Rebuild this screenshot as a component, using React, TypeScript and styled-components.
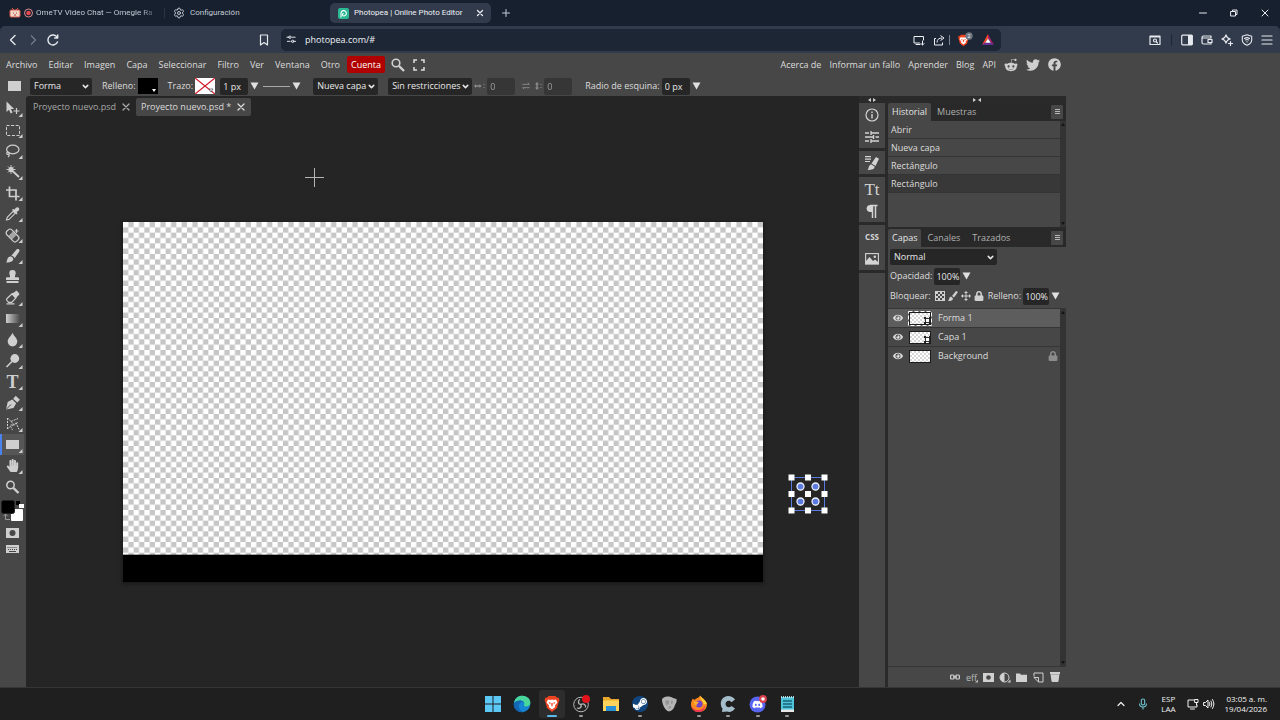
import React from "react";
import styled, { createGlobalStyle } from "styled-components";
import {
  FaDiscord,
  FaEye,
  FaFacebook,
  FaHandPaper,
  FaLock,
  FaRedditAlien,
  FaSteamSymbol,
  FaTwitter,
} from "react-icons/fa";
import { ChevronDown, Settings } from "lucide-react";

const UI = '"Open Sans", "Noto Sans", sans-serif';
const CHROME = 'Roboto, "Open Sans", sans-serif';

const Global = createGlobalStyle`
  *, *::before, *::after { box-sizing: border-box; }
  body { margin: 0; background: #474747; }
  button, input, select { font: inherit; color: inherit; border: 0; margin: 0; padding: 0; background: none; border-radius: 0; }
  button { cursor: pointer; }
  a { color: inherit; text-decoration: none; }
  svg { display: block; flex: none; }
  ul { list-style: none; margin: 0; padding: 0; }
`;

const Screen = styled.div`
  min-height: 100vh;
  display: flex;
  flex-direction: column;
  background: #474747;
  color: #dcdcdc;
  font-family: ${UI};
  font-size: 9px;
  line-height: 12px;
`;

/* ---------- browser chrome ---------- */
const TabStrip = styled.header`
  height: 26px;
  display: flex;
  align-items: center;
  background: #17202f;
  color: #c3cad6;
  font-family: ${CHROME};
  font-size: 8px;
  flex: none;
`;
const BrowserTab = styled.div<{ $active?: boolean; $width: number }>`
  width: ${(p) => p.$width}px;
  height: 20px;
  display: flex;
  align-items: center;
  gap: 5px;
  padding: 0 6px 0 8px;
  border-radius: 5px;
  white-space: nowrap;
  background: ${(p) => (p.$active ? "#323b4b" : "transparent")};
  color: ${(p) => (p.$active ? "#eef1f6" : "inherit")};
`;
const FadeTitle = styled.span`
  flex: 1;
  margin-left: -3px;
  mask-image: linear-gradient(90deg, #000 86%, transparent);
`;
const TabTitle = styled.span`
  flex: 1;
`;
const TabDivider = styled.span`
  width: 1px;
  height: 10px;
  background: #2b3547;
`;
const IconButton = styled.button<{ $w?: number; $h?: number }>`
  width: ${(p) => p.$w ?? 20}px;
  height: ${(p) => p.$h ?? 20}px;
  display: flex;
  align-items: center;
  justify-content: center;
`;
const WindowButtons = styled.div`
  margin-left: auto;
  display: flex;
  color: #e6e9ee;
`;
const NavStrip = styled.div`
  background: #17202f;
`;
const NavBar = styled.nav`
  height: 27px;
  display: flex;
  align-items: center;
  padding-left: 3px;
  padding-right: 3px;
  background: #323b4b;
  border-radius: 5px 5px 0 0;
  color: #e6e9ee;
`;
const Bookmark = styled(IconButton)`
  margin-left: 191px;
`;
const AddressBar = styled.div`
  flex: 1;
  height: 22px;
  margin-left: 7px;
  display: flex;
  align-items: center;
  gap: 6px;
  padding: 0 5px;
  border-radius: 5px;
  background: #1d2635;
  color: #eef1f6;
`;
const Address = styled.input`
  flex: 1;
  min-width: 0;
  padding-left: 2px;
  outline: none;
`;
const NavActions = styled.div`
  display: flex;
  margin-left: 144px;
`;
const NavSeparator = styled.span`
  width: 1px;
  height: 12px;
  margin: 4px 5px 0 6px;
  background: #1d2635;
`;

/* ---------- menus and options ---------- */
const MenuBar = styled.nav`
  height: 23px;
  display: flex;
  align-items: center;
  padding-right: 214px;
  flex: none;
`;
const MenuItem = styled.button<{ $hot?: boolean }>`
  height: 17px;
  padding: 0 ${(p) => (p.$hot ? 4 : 5)}px 0 ${(p) => (p.$hot ? 4 : 6)}px;
  margin-left: ${(p) => (p.$hot ? 2 : 0)}px;
  border-radius: 2px;
  background: ${(p) => (p.$hot ? "#b00000" : "transparent")};
  color: ${(p) => (p.$hot ? "#fff" : "inherit")};
`;
const MenuLinks = styled.div`
  margin-left: auto;
  display: flex;
  align-items: center;
  gap: 8px;
  padding-right: 5px;
`;
const Socials = styled.div`
  display: flex;
  align-items: center;
  gap: 8px;
  color: #cfcfcf;
`;
const OptionsBar = styled.div`
  height: 20px;
  display: flex;
  align-items: center;
  padding-left: 8px;
  flex: none;
`;
const OptionGroup = styled.div<{ $before?: number; $dim?: boolean }>`
  display: flex;
  align-items: center;
  gap: 2px;
  margin-left: ${(p) => p.$before ?? 10}px;
  opacity: ${(p) => (p.$dim ? 0.5 : 1)};
`;
const SelectBox = styled.div<{ $width: number; $h?: number }>`
  width: ${(p) => p.$width}px;
  height: ${(p) => p.$h ?? 17}px;
  position: relative;
  border-radius: 2px;
  background: #262626;
  color: #e8e8e8;
  select {
    width: 100%;
    height: 100%;
    padding-left: 4px;
    appearance: none;
    outline: none;
  }
  svg {
    position: absolute;
    right: 2px;
    top: 4px;
    pointer-events: none;
  }
`;
const NumberBox = styled.input<{ $width?: number }>`
  width: ${(p) => p.$width ?? 28}px;
  height: 17px;
  padding-left: ${(p) => (p.$width ? 2 : 3)}px;
  border-radius: 2px;
  background: #262626;
  color: #e8e8e8;
  outline: none;
`;
const Swatch = styled.button`
  width: 20px;
  height: 16px;
`;

/* ---------- workspace ---------- */
const Workspace = styled.main`
  flex: 1;
  display: flex;
  padding-right: 214px;
`;
const Toolbox = styled.aside`
  width: 26px;
  padding-top: 2px;
  display: flex;
  flex-direction: column;
  flex: none;
  color: #cfcfcf;
`;
const ToolButton = styled.button<{ $active?: boolean; $h?: number }>`
  height: ${(p) => p.$h ?? 21}px;
  width: 24px;
  background: ${(p) => (p.$active ? "#565656" : "transparent")};
  box-shadow: ${(p) => (p.$active ? "inset 2px 0 #4a83f0" : "none")};
`;
const Editor = styled.section`
  flex: 1;
  min-width: 0;
  display: flex;
  flex-direction: column;
  background: #252525;
  border-radius: 3px 0 0 0;
`;
const DocTabs = styled.div`
  display: flex;
  padding-top: 2px;
`;
const DocTab = styled.div<{ $active?: boolean }>`
  height: 18px;
  display: flex;
  align-items: center;
  gap: 3px;
  padding: 0 3px 0 ${(p) => (p.$active ? 5 : 7)}px;
  border-radius: 2px;
  background: ${(p) => (p.$active ? "#474747" : "transparent")};
  color: ${(p) => (p.$active ? "#dcdcdc" : "#a8a8a8")};
`;
const Stage = styled.div`
  flex: 1;
  display: flex;
  align-items: center;
  justify-content: center;
`;
const Artboard = styled.div`
  position: relative;
  box-shadow: 0 1px 3px 1px #1a1a1a;
`;
const Overlay = styled.svg<{ $x: number; $y: number }>`
  position: absolute;
  left: ${(p) => p.$x}px;
  top: ${(p) => p.$y}px;
`;

/* ---------- right side panels ---------- */
const Dock = styled.aside`
  display: flex;
  background: #2a2a2a;
  flex: none;
`;
const DockColumn = styled.div<{ $width: number }>`
  width: ${(p) => p.$width}px;
  margin-right: ${(p) => (p.$width < 50 ? 3 : 0)}px;
  display: flex;
  flex-direction: column;
`;
const Handle = styled.div`
  height: 7px;
  display: flex;
  justify-content: center;
  align-items: center;
`;
const DockGroup = styled.div<{ $fill?: boolean }>`
  display: flex;
  flex-direction: column;
  align-items: center;
  margin-bottom: ${(p) => (p.$fill ? 0 : 3)}px;
  padding: 1px 0;
  flex: ${(p) => (p.$fill ? 1 : "none")};
  background: #474747;
  color: #d4d4d4;
`;
const PanelTabs = styled.div`
  height: 18px;
  display: flex;
  align-items: center;
  padding-right: 3px;
  background: #292929;
`;
const PanelTab = styled.button<{ $active?: boolean }>`
  height: 18px;
  padding: 0 ${(p) => (p.$active ? 4 : 6)}px;
  border-radius: 2px 2px 0 0;
  background: ${(p) => (p.$active ? "#474747" : "transparent")};
  color: ${(p) => (p.$active ? "#e4e4e4" : "#b0b0b0")};
`;
const PanelMenu = styled(IconButton)`
  margin-left: auto;
  background: #474747;
  border-radius: 1px;
`;
const HistoryPanel = styled.div`
  display: flex;
  height: 106px;
  margin-bottom: 2px;
  background: #474747;
`;
const List = styled.ul`
  flex: 1;
`;
const HistoryRow = styled.li<{ $current?: boolean }>`
  height: 18px;
  padding: 3px 3px 2px;
  border-bottom: 1px solid #343434;
  background: ${(p) => (p.$current ? "#383838" : "transparent")};
`;
const Scrollbar = styled.div`
  width: 6px;
  display: flex;
  flex-direction: column;
  justify-content: space-between;
  align-items: center;
  padding: 2px 0;
  background: #333;
`;
const LayersPanel = styled.div`
  flex: 1;
  display: flex;
  flex-direction: column;
  background: #474747;
`;
const LayerControls = styled.div`
  display: flex;
  flex-direction: column;
  gap: 2px;
  padding: 2px 2px 3px;
`;
const ControlRow = styled.div`
  height: 18px;
  display: flex;
  align-items: center;
  gap: 2px;
`;
const LockButtons = styled.div`
  display: flex;
  gap: 3px;
  margin-left: 2px;
`;
const LayerArea = styled.div`
  flex: 1;
  display: flex;
  border-top: 1px solid #363636;
  border-bottom: 1px solid #363636;
`;
const LayerRow = styled.li<{ $active?: boolean }>`
  height: 19px;
  display: flex;
  align-items: center;
  padding: 0 2px 0 4px;
  border-bottom: 1px solid #363636;
  background: ${(p) => (p.$active ? "#5d5d5d" : "transparent")};
  &:last-child {
    border-bottom-color: transparent;
  }
`;
const LayerName = styled.span`
  flex: 1;
  padding-left: 6px;
`;
const LayerActions = styled.div`
  height: 20px;
  display: flex;
  align-items: center;
  justify-content: flex-end;
  padding-right: 3px;
  color: #d0d0d0;
`;

/* ---------- taskbar ---------- */
const Taskbar = styled.footer`
  height: 33px;
  display: grid;
  grid-template-columns: 1fr 320px 1fr;
  align-items: center;
  border-top: 1px solid #363636;
  background: #1f1f1f;
  color: #f2f2f2;
  font-size: 8px;
  line-height: 10px;
  flex: none;
`;
const Apps = styled.div`
  grid-column: 2;
  display: flex;
  justify-content: space-between;
`;
const AppButton = styled.button<{ $active?: boolean }>`
  width: 26px;
  height: 28px;
  display: flex;
  flex-direction: column;
  align-items: center;
  justify-content: space-between;
  padding-top: 5px;
  padding-bottom: 1px;
  border-radius: 3px;
  background: ${(p) => (p.$active ? "#2d2d2d" : "transparent")};
`;
const RunMark = styled.span<{ $kind: "none" | "open" | "active" }>`
  height: 2px;
  width: ${(p) => (p.$kind === "active" ? 10 : 4)}px;
  border-radius: 1px;
  background: ${(p) => (p.$kind === "active" ? "#5cb8e8" : p.$kind === "open" ? "#9a9a9a" : "transparent")};
`;
const Tray = styled.div`
  display: flex;
  align-items: center;
  justify-content: flex-end;
  padding-right: 13px;
`;
const TrayText = styled.div<{ $align: string }>`
  text-align: ${(p) => p.$align};
  white-space: nowrap;
`;
const Language = styled(TrayText)`
  margin: 0 9px 0 7px;
`;
const Clock = styled(TrayText)`
  margin-left: 8px;
`;

/* ---------- small drawings ---------- */
const Line = ({ d, size = 12, w = 1 }: { d: string; size?: number; w?: number }) => (
  <svg width={size} height={size} viewBox="0 0 12 12" fill="none" stroke="currentColor" strokeWidth={w} strokeLinecap="round" strokeLinejoin="round">
    <path d={d} />
  </svg>
);
const Caret = () => (
  <svg width="9" height="8" viewBox="0 0 9 8">
    <path d="M.5 .5h8L4.500 7.500z" fill="#e0e0e0" />
  </svg>
);
const Cross = () => <Line d="M3 3l6 6M9 3l-6 6" w={1.3} />;
const Burger = () => (
  <svg width="5" height="6" viewBox="0 0 5 6" stroke="#b8b8b8">
    <path d="M0 .5h5M0 2.500h5M0 4.500h5" />
  </svg>
);
const ScrollEnd = ({ up }: { up?: boolean }) => (
  <svg width="4" height="3" viewBox="0 0 4 3">
    <path d={up ? "M0 3h4L2 0z" : "M0 0h4L2 3z"} fill="#141414" />
  </svg>
);
const Grip = ({ inward }: { inward?: boolean }) => (
  <svg width="8" height="4" viewBox="0 0 8 4" fill="#d0d0d0">
    <path d={inward ? "M0 0v4l3-2zM8 0v4L5 2z" : "M3 0v4L0 2zM5 0v4l3-2z"} />
  </svg>
);

function Dropdown({ label, options, width, height }: { label: string; options: string[]; width: number; height?: number }) {
  return (
    <SelectBox $width={width} $h={height}>
      <select aria-label={label} defaultValue={options[0]}>
        {options.map((o) => (
          <option key={o}>{o}</option>
        ))}
      </select>
      <ChevronDown size={9} strokeWidth={4} />
    </SelectBox>
  );
}

const S = { fill: "none", stroke: "currentColor", strokeWidth: 1.2 } as const;
const tools: { name: string; art: React.ReactNode; plain?: boolean }[] = [
  {
    name: "Mover",
    art: (
      <>
        <path d="M6.500 3.500v10.500l2.500-2.300 1.700 3.800 1.900-.9-1.700-3.600h3.300z" fill="currentColor" />
        <path d="M16.500 10v6M13.500 13h6" {...S} />
      </>
    ),
  },
  { name: "Marco rectangular", art: <rect x="6.500" y="6.500" width="13" height="10" {...S} strokeWidth={1} strokeDasharray="3 1.600" /> },
  {
    name: "Lazo",
    art: (
      <g {...S}>
        <ellipse cx="12.800" cy="9.500" rx="6.200" ry="4.300" />
        <path d="M7.500 12c-1.600 1.300-.3 3 1 2.200s.3-2.700-1.300-2M9 14c.5 1 0 2.300-1 3" />
      </g>
    ),
  },
  {
    name: "Varita mágica",
    art: (
      <g {...S}>
        <circle cx="11" cy="8.500" r="2" fill="currentColor" />
        <path d="M11 4v9M6.500 8.500h9M8 5.500l6 6M14 5.500l-6 6" strokeWidth="0.900" />
        <path d="M12 9.500l7 6.500" strokeWidth="1.800" />
      </g>
    ),
  },
  { name: "Recortar", art: <path d="M9.500 4.500v10H19.500M6 8h10V18.500" {...S} strokeWidth={1.700} /> },
  {
    name: "Cuentagotas",
    art: (
      <>
        <path d="M6.500 17l.7-2.700 6-6 2 2-6 6z" {...S} strokeWidth={1.100} />
        <path d="M12 7l1.200-1.200 1 1L16 4.700c1.800-1.700 4.500 1 2.700 2.700L16.600 9.200l1 1-1.200 1.200z" fill="currentColor" />
      </>
    ),
  },
  {
    name: "Pincel corrector",
    art: (
      <>
        <g transform="rotate(45 12.500 11.500)">
          <rect x="5.500" y="8" width="14" height="7" rx="2.500" {...S} />
          <rect x="10" y="8.500" width="5" height="6" fill="currentColor" opacity="0.700" />
        </g>
        <path d="M16.500 5v4M14.500 7h4" {...S} />
      </>
    ),
  },
  { name: "Pincel", art: <path d="M6 17.500c1.500-1 .7-3.800 2.500-5.200 1.600-1.300 3.700-.6 4.500.9.900 2.200-1 4.300-7 4.300zM11.300 10.800l5.200-6.300c1.900-1.400 3.900.4 2.600 2.300L14.600 13.200c-.6-1.500-1.700-2.200-3.300-2.400z" fill="currentColor" /> },
  { name: "Tampón", plain: true, art: <path d="M12.500 4a3.200 3.200 0 0 1 3.200 3.400c-.1 1.200-.9 2-.7 3.900H18a1 1 0 0 1 1 1V14H6v-1.700a1 1 0 0 1 1-1h3c.2-1.900-.6-2.700-.7-3.900A3.200 3.200 0 0 1 12.500 4zM6.500 15h12v2h-12z" fill="currentColor" /> },
  {
    name: "Borrador",
    art: (
      <>
        <path d="M11.500 7.200l4-3c.7-.5 1.300-.4 1.800.1l1.700 2c.5.7.4 1.300-.1 1.800l-3.500 3.500z" fill="currentColor" />
        <path d="M12.400 6.500L7 11.500c-.8.8-.6 1.500 0 2.200l1.700 1.700h3l4.300-4.600zM6.500 16.800h8" {...S} />
      </>
    ),
  },
  { name: "Degradado", art: <rect x="6" y="6" width="14" height="9" fill="url(#fadeFill)" /> },
  { name: "Desenfocar", art: <path d="M12.500 3.800c1 3 4.800 5.500 4.800 8.800a4.800 4.800 0 0 1-9.600 0c0-3.300 3.800-5.800 4.800-8.800z" fill="currentColor" /> },
  {
    name: "Sobreexponer",
    art: (
      <>
        <circle cx="14.800" cy="8.500" r="4.400" fill="currentColor" />
        <path d="M12 11.500l-5.500 5.500" {...S} strokeWidth={1.600} />
      </>
    ),
  },
  {
    name: "Texto",
    art: (
      <text x="12.500" y="17" textAnchor="middle" fontFamily="Liberation Serif, serif" fontWeight="700" fontSize="18" fill="currentColor">
        T
      </text>
    ),
  },
  {
    name: "Pluma",
    art: (
      <>
        <path d="M6 17.500l1.700-7.500 4.500-2.500 4 3.800-2.700 4.600z" fill="currentColor" />
        <path d="M6.500 17l4.500-4.500" stroke="#474747" />
        <path d="M13.200 6.700l2.500-2.900 4.200 4-2.700 2.700z" fill="currentColor" />
      </>
    ),
  },
  {
    name: "Selección de trazado",
    art: <path d="M7.500 5v11l3-2.800 2 3.800M7.500 5l7 7h-4M11 8.500l7-3M16 9.500l3 7M12 12.500l6-3" {...S} strokeWidth={1} strokeDasharray="2 1" />,
  },
  { name: "Rectángulo", art: <rect x="6" y="6" width="13" height="9" fill="currentColor" /> },
  { name: "Mano", art: <FaHandPaper x="6" y="4" size={13} /> },
  {
    name: "Lupa",
    plain: true,
    art: (
      <g {...S}>
        <circle cx="10.500" cy="9" r="3.700" strokeWidth="1.500" />
        <path d="M13.500 12l5 5" strokeWidth="2.400" />
      </g>
    ),
  },
];

function ToolIcon({ art, plain }: { art: React.ReactNode; plain?: boolean }) {
  return (
    <svg width="24" height="21" viewBox="0 0 24 21">
      <defs>
        <linearGradient id="fadeFill">
          <stop offset="0" stopColor="#cfcfcf" />
          <stop offset="1" stopColor="#474747" />
        </linearGradient>
      </defs>
      {art}
      {!plain && <path d="M22.500 15v4h-4z" fill="#cfcfcf" />}
    </svg>
  );
}

const Thumb = ({ kind }: { kind: "selected" | "shape" | "plain" }) => (
  <svg width="24" height="15" viewBox="0 0 24 15">
    <defs>
      <pattern id="thumbChecks" width="4" height="4" patternUnits="userSpaceOnUse">
        <rect width="4" height="4" fill="#fff" />
        <path d="M0 0h2v2H0zM2 2h2v2H2z" fill="#d6d6d6" />
      </pattern>
    </defs>
    <rect x="1.500" y="1.500" width="21" height="12" fill="url(#thumbChecks)" stroke="#1c1c1c" />
    {kind === "selected" && <rect x=".5" y=".5" width="23" height="14" fill="none" stroke="#fff" strokeDasharray="4 2" />}
    {kind !== "plain" && (
      <g>
        <rect x="17.500" y="7.500" width="4" height="4" fill="#fff" stroke="#333" />
        <path d="M16 6h2v2h-2zM21 6h2v2h-2zM16 11h2v2h-2zM21 11h2v2h-2z" fill="#222" />
      </g>
    )}
  </svg>
);

const layers: { name: string; kind: "selected" | "shape" | "plain" }[] = [
  { name: "Forma 1", kind: "selected" },
  { name: "Capa 1", kind: "shape" },
  { name: "Background", kind: "plain" },
];

const BraveMark = ({ size, x, y }: { size: number; x?: number; y?: number }) => (
  <svg x={x} y={y} width={size} height={size} viewBox="0 0 18 18">
    <path d="M5.500 1h7l1.500 1.700 1.500-.2 1 2.500-.7 1.500-1.800 6.500L9 17l-5-4-1.800-6.500L1.500 5l1-2.500 1.500.2z" fill="#f0431f" />
    <path d="M5 4.500l2.500.5L9 4.500l1.500.5 2.500-.5 1.500 3-2.500 3 .3 1.500L9 14.500 5.700 12l.3-1.500-2.500-3z" fill="#fff" />
    <path d="M5.500 7l2.300.7-.8 1.500zM12.500 7l-2.300.7.8 1.500zM8.300 8h1.400v2.500L9 11.500l-.7-1z" fill="#f0431f" />
  </svg>
);

type RunState = "none" | "open" | "active";
const apps: { name: string; state: RunState; art: React.ReactNode }[] = [
  {
    name: "Inicio",
    state: "none",
    art: <path d="M1 1h7.500v7.500H1zM9.500 1H17v7.500H9.500zM1 9.500h7.500V17H1zM9.500 9.500H17V17H9.500z" fill="#5cc8f5" />,
  },
  {
    name: "Edge",
    state: "none",
    art: (
      <>
        <circle cx="9" cy="9" r="8.300" fill="#1685d2" />
        <path d="M1 8C2 2.500 6 .7 9.500.7c5 0 8.200 3.800 7.900 7.300-.2 3-3.400 3.800-5.400 3.200-1.500-.4-1-1.200-.7-2.300C12 6 6 3.500 1 8z" fill="#48d69a" />
        <path d="M1 8c4-3.500 8-2.600 9.500-1-3.500-.5-5.500 2.500-4.500 5.500.7 2.200 2.500 3.800 4 4.700C4 18 0 13 1 8z" fill="#1467b5" />
      </>
    ),
  },
  { name: "Brave", state: "active", art: <BraveMark size={18} /> },
  {
    name: "OBS",
    state: "open",
    art: (
      <>
        <circle cx="9" cy="9.500" r="7.300" fill="#222" stroke="#b8b8b8" />
        <path d="M9 9.500C5.500 9 6 5.500 8 4.500M9 9.500c3-1.500 5 .5 4.500 3M9 9.500c1 3-1.500 4.500-4 3.500" fill="none" stroke="#b8b8b8" strokeWidth="1.300" />
        <circle cx="14" cy="4" r="4" fill="#e3131b" />
      </>
    ),
  },
  {
    name: "Explorador",
    state: "none",
    art: (
      <>
        <path d="M1 2h6l2 2h8v12H1z" fill="#e9a92b" />
        <path d="M1 5.500h16V16H1z" fill="#ffd35c" />
        <path d="M4 11h10v5H4z" fill="#2b8fd8" />
      </>
    ),
  },
  {
    name: "Steam",
    state: "open",
    art: (
      <>
        <circle cx="9" cy="9" r="8" fill="#10467d" />
        <FaSteamSymbol x="1" y="1" size={16} color="#fff" />
      </>
    ),
  },
  {
    name: "Juego",
    state: "none",
    art: (
      <>
        <path d="M2 5c0-2 3-3.500 6-3.500 2 0 3.500.5 5 1.500l3.500 1c.7 2.500-.7 4.500-1.500 6-1 3.500-3 6-6 6.500C5 15.500 2.500 10 2 5z" fill="#b4b4b4" />
        <path d="M5 6l3-1 1.500 2-1 2.500-2.500.5zM11 5.500l2 .5-.5 2.500-1.500.5zM8 12l3-1v1.500L9 14z" fill="#949494" />
      </>
    ),
  },
  {
    name: "Firefox",
    state: "open",
    art: (
      <>
        <path d="M3 3.500L4.200 5C6 3 8 3.500 9 2l1.200-1.500c.6 2 5.500 3.500 6.600 8C17.500 13 14 17 9 17S1 13.500 1 9.500C1 7 1.800 5 3 3.500z" fill="#ff8a1e" />
        <path d="M10.500.5c.5 3 5.700 4.500 6.300 8.500l-3 .5C13.500 6 9.500 4 10.500.5z" fill="#ffd43a" />
        <path d="M1 9.500c1 4.500 5 6 8.500 5.500 3-.5 5-2.500 5.500-5 .5 4-2.500 7-6 7-4.500 0-8-3.500-8-7.500z" fill="#f0325a" />
        <circle cx="9" cy="9" r="3.500" fill="#7344c8" />
        <path d="M4 6.500l4 .2c1 0 .8 1.500-.5 1.800-1 .3-1 1.500-.5 2.500C5 10.500 4 9 4 6.500z" fill="#ffb02e" />
      </>
    ),
  },
  {
    name: "Cliente",
    state: "open",
    art: (
      <path d="M16 4.500l-3.500 2.700C10 4.500 6.500 6 6.500 9s3.500 4.500 6 2l3.500 2.500C14 16.500 11 17.500 8 16.500L3 17l.5-3.500C-.5 8.500 3 1 9 1c3 0 5.500 1.200 7 3.500z" fill="#a5bccb" />
    ),
  },
  {
    name: "Discord",
    state: "open",
    art: (
      <>
        <circle cx="8.500" cy="9.500" r="8" fill="#5865f2" />
        <FaDiscord x="3" y="4" size={11} color="#fff" />
        <circle cx="14" cy="4" r="3.900" fill="#d9414d" />
        <circle cx="14" cy="4" r="1.800" fill="#fff" />
      </>
    ),
  },
  {
    name: "Bloc de notas",
    state: "open",
    art: (
      <>
        <path d="M3 2h13v14.500H3z" fill="#4fc3d8" />
        <path d="M3 14.500h13v2.500H3z" fill="#e8e8e8" />
        <path d="M3.500 1v2M5.500 1v2M7.500 1v2M9.500 1v2M11.500 1v2M13.500 1v2M15.500 1v2" stroke="#d8f3f7" strokeWidth=".8" />
        <path d="M5 6h9M5 9h9M5 12h9" stroke="#17647a" strokeWidth="1.300" />
      </>
    ),
  },
];

const Glyph = ({ children, size, family = "Liberation Serif, serif", weight = 400 }: { children: string; size: number; family?: string; weight?: number }) => (
  <svg width="18" height="18" viewBox="0 0 18 18">
    <text x="9" y={9 + Math.round(size / 3)} textAnchor="middle" fontFamily={family} fontWeight={weight} fontSize={size} fill="currentColor">
      {children}
    </text>
  </svg>
);

export default function App() {
  return (
    <Screen>
      <Global />
      <TabStrip>
        <BrowserTab $width={164}>
          <svg width="26" height="12" viewBox="0 0 26 12">
            <rect x="2" y="3" width="10" height="7" rx="1" fill="#f2d8c9" stroke="#d9594c" />
            <path d="M4 1l2 2M10 1l-2 2" stroke="#d9594c" />
            <path d="M5 6h1M8 6h1M6 8h2" stroke="#b03a36" />
            <circle cx="20.500" cy="6" r="4" fill="none" stroke="#d98c92" />
            <circle cx="20.500" cy="6" r="2.300" fill="#e5484d" />
          </svg>
          <FadeTitle>OmeTV Video Chat — Omegle Ra</FadeTitle>
        </BrowserTab>
        <TabDivider />
        <BrowserTab $width={165}>
          <Settings size={12} />
          <TabTitle>Configuración</TabTitle>
        </BrowserTab>
        <BrowserTab $active $width={161}>
          <svg width="11" height="11" viewBox="0 0 11 11">
            <rect width="11" height="11" rx="2" fill="#2bb894" />
            <path d="M3 9.500V5.500A2.700 2.700 0 1 1 5.700 8C4 8 4 5.500 5.700 5.500" fill="none" stroke="#fff" strokeWidth="1.100" />
          </svg>
          <TabTitle>Photopea | Online Photo Editor</TabTitle>
          <IconButton $w={10} aria-label="Cerrar pestaña">
            <Line d="M3.500 3.500l5 5M8.500 3.500l-5 5" w={1.200} />
          </IconButton>
        </BrowserTab>
        <IconButton $w={30} aria-label="Nueva pestaña">
          <Line d="M2.500 6h7M6 2.500v7" />
        </IconButton>
        <WindowButtons>
          <IconButton $w={31} aria-label="Minimizar">
            <Line d="M2.500 6h7" />
          </IconButton>
          <IconButton $w={31} aria-label="Restaurar">
            <Line d="M3 4.500h4.500V9H3zM4.500 4V3H9v4.500H8" />
          </IconButton>
          <IconButton $w={31} aria-label="Cerrar">
            <Line d="M3 3l6 6M9 3l-6 6" />
          </IconButton>
        </WindowButtons>
      </TabStrip>
      <NavStrip>
        <NavBar>
          <IconButton aria-label="Atrás">
            <Line d="M8 1.500L3.500 6 8 10.500" w={1.400} />
          </IconButton>
          <IconButton aria-label="Adelante">
            <svg width="12" height="12" viewBox="0 0 12 12" fill="none" stroke="#727b8a" strokeWidth="1.300">
              <path d="M4 1.500L8.500 6 4 10.500" />
            </svg>
          </IconButton>
          <IconButton aria-label="Recargar">
            <Line d="M10.500 8A5 5 0 1 1 10.300 3.500M10.700 1v3h-3" w={1.400} />
          </IconButton>
          <Bookmark aria-label="Marcador" $w={20}>
            <Line d="M2.500 1h7v10L6 8.500 2.500 11z" w={1.200} />
          </Bookmark>
          <AddressBar>
            <Line d="M1 3.500h2M6.500 3.500H10M1.500 8h3M8 8h2.500M3 3.500a1.300 1.300 0 1 0 2.600 0a1.300 1.300 0 1 0-2.600 0M6 8a1.300 1.300 0 1 0 2.600 0A1.300 1.300 0 1 0 6 8" size={11} />
            <Address aria-label="Dirección" defaultValue="photopea.com/#" />
            <IconButton $w={13} aria-label="Instalar">
              <Line d="M6.500 9H1V2.500h9.500V6M3 10.500h4M9.500 7v4M8 9.500l1.500 1.500L11 9.500" />
            </IconButton>
            <IconButton $w={19} aria-label="Compartir">
              <svg width="19" height="12" viewBox="0 0 19 12" fill="none" stroke="currentColor">
                <path d="M5 4.500H3.500V11h8V8.500M6 8.500c0-3 2-4.500 5-4.500M9.500 1.500l3.500 2.500-3.500 2.500" strokeLinejoin="round" />
                <path d="M18.500 1v10" stroke="#7d8695" />
              </svg>
            </IconButton>
            <IconButton $w={17} aria-label="Escudos de Brave">
              <svg width="17" height="16" viewBox="0 0 17 16">
                <BraveMark x={1} y={2} size={13} />
                <circle cx="13" cy="4" r="3.700" fill="#6e7684" />
                <text x="13" y="6" textAnchor="middle" fontSize="5" fill="#fff" fontFamily="Open Sans, sans-serif">
                  2
                </text>
              </svg>
            </IconButton>
            <IconButton $w={17} aria-label="Recompensas">
              <svg width="12" height="11" viewBox="0 0 11 10">
                <path d="M5.500 0v4L3 8l-3 2z" fill="#ff4724" />
                <path d="M5.500 0v4L8 8l3 2z" fill="#9e1f63" />
                <path d="M0 10l3-2.500h5L11 10z" fill="#662d91" />
                <path d="M5.500 4L8 8H3z" fill="#fff" />
              </svg>
            </IconButton>
          </AddressBar>
          <NavActions>
            <IconButton aria-label="Buscar pestañas">
              <Line d="M1 2h10v8.500H1zM1 3h10M4.500 6.500a1.500 1.500 0 1 0 3 0a1.500 1.500 0 1 0-3 0M7 7.500l1.500 1.500" w={1.200} />
            </IconButton>
            <NavSeparator />
            <IconButton aria-label="Panel lateral">
              <svg width="12" height="12" viewBox="0 0 12 12">
                <rect x=".7" y="1.200" width="10.600" height="9.600" rx="1" fill="none" stroke="currentColor" strokeWidth="1.200" />
                <path d="M7 1h4.500v10H7z" fill="currentColor" />
              </svg>
            </IconButton>
            <IconButton aria-label="Cartera">
              <Line d="M10 4V2H2.500A1.500 1.500 0 0 0 1 3.500v5A1.500 1.500 0 0 0 2.500 10H10V8.500M1.200 4H10M7 5.500h4v3H7z" w={1.200} />
            </IconButton>
            <IconButton aria-label="Leo">
              <Line d="M5 .8c.6 2.700 1.500 3.600 4.200 4.200C6.500 5.600 5.600 6.500 5 9.200 4.400 6.500 3.500 5.600.8 5 3.500 4.400 4.400 3.500 5 .8zM9.500 7.500v4M7.500 9.500h4" w={1.200} />
            </IconButton>
            <IconButton aria-label="VPN">
              <Line d="M6 .8l4.700 1.500V6c0 2.500-2 4.200-4.700 5.300C3.300 10.200 1.300 8.500 1.300 6V2.300zM3.500 4.500c1.500-1 3.500-1 5 0M4.500 6c1-.6 2-.6 3 0M6 7.500v.5" w={1.100} />
            </IconButton>
            <IconButton aria-label="Menú">
              <Line d="M1 2h10M1 6h10M1 10h10" w={1.200} />
            </IconButton>
          </NavActions>
        </NavBar>
      </NavStrip>

      <MenuBar>
        {["Archivo", "Editar", "Imagen", "Capa", "Seleccionar", "Filtro", "Ver", "Ventana", "Otro"].map((m) => (
          <MenuItem key={m}>{m}</MenuItem>
        ))}
        <MenuItem $hot>Cuenta</MenuItem>
        <IconButton $w={26} aria-label="Buscar">
          <svg width="14" height="14" viewBox="0 0 14 14" fill="none" stroke="#d0d0d0">
            <circle cx="5" cy="5" r="3.800" strokeWidth="1.600" />
            <path d="M8 8l5 5" strokeWidth="2.400" />
          </svg>
        </IconButton>
        <IconButton $w={16} aria-label="Pantalla completa">
          <svg width="12" height="12" viewBox="0 0 12 12" fill="none" stroke="#e0e0e0" strokeWidth="1.500">
            <path d="M1 4V1h3M8 1h3v3M11 8v3H8M4 11H1V8" />
          </svg>
        </IconButton>
        <MenuLinks>
          {["Acerca de", "Informar un fallo", "Aprender", "Blog", "API"].map((m) => (
            <a key={m} href="#">
              {m}
            </a>
          ))}
          <Socials>
            <a href="#" aria-label="Reddit">
              <FaRedditAlien size={14} />
            </a>
            <a href="#" aria-label="Twitter">
              <FaTwitter size={14} />
            </a>
            <a href="#" aria-label="Facebook">
              <FaFacebook size={13} />
            </a>
          </Socials>
        </MenuLinks>
      </MenuBar>

      <OptionsBar>
        <svg width="13" height="10" viewBox="0 0 13 10">
          <rect width="13" height="10" fill="#cfcfcf" />
        </svg>
        <OptionGroup $before={9}>
          <Dropdown label="Modo" width={62} options={["Forma", "Trazado", "Píxeles"]} />
        </OptionGroup>
        <OptionGroup>
          <span>Relleno:</span>
          <Swatch aria-label="Color de relleno">
            <svg width="20" height="16" viewBox="0 0 20 16">
              <rect width="20" height="16" fill="#000" />
              <path d="M14 11h4l-2 3z" fill="#fff" />
            </svg>
          </Swatch>
        </OptionGroup>
        <OptionGroup>
          <span>Trazo:</span>
          <Swatch aria-label="Color de trazo">
            <svg width="20" height="16" viewBox="0 0 20 16">
              <rect width="20" height="16" fill="#fff" />
              <path d="M0 0l20 16M20 0L0 16" stroke="#d2202f" strokeWidth="1.300" />
              <path d="M14 11h4l-2 3z" fill="#fff" stroke="#333" strokeWidth=".6" />
            </svg>
          </Swatch>
        </OptionGroup>
        <OptionGroup $before={5}>
          <NumberBox aria-label="Grosor" defaultValue="1 px" />
          <Caret />
        </OptionGroup>
        <OptionGroup $before={4}>
          <svg width="27" height="8" viewBox="0 0 27 8">
            <path d="M0 4.500h27" stroke="#a8a8a8" />
          </svg>
          <Caret />
        </OptionGroup>
        <OptionGroup $before={12}>
          <Dropdown label="Operación" width={65} options={["Nueva capa", "Combinar"]} />
        </OptionGroup>
        <OptionGroup>
          <Dropdown label="Restricciones" width={84} options={["Sin restricciones", "Tamaño fijo"]} />
        </OptionGroup>
        <OptionGroup $dim $before={2}>
          <svg width="11" height="8" viewBox="0 0 11 8">
            <path d="M0 4l2-2v1.300h3.500V2l2 2-2 2V4.700H2V6zM9.500 2h1v1h-1zM9.500 5h1v1h-1z" fill="#cfcfcf" />
          </svg>
          <NumberBox aria-label="Ancho" defaultValue="0" disabled />
        </OptionGroup>
        <OptionGroup $dim $before={4}>
          <IconButton $w={14} $h={16} aria-label="Intercambiar">
            <Line d="M2 4h8L8.500 2.500M10 8H2l1.500 1.500" size={10} />
          </IconButton>
        </OptionGroup>
        <OptionGroup $dim $before={2}>
          <svg width="7" height="8" viewBox="0 0 7 8">
            <path d="M2 0l2 2.500H2.700v3H4L2 8 0 5.500h1.300v-3H0zM5.500 2h1v1h-1zM5.500 5h1v1h-1z" fill="#cfcfcf" />
          </svg>
          <NumberBox aria-label="Alto" defaultValue="0" disabled />
        </OptionGroup>
        <OptionGroup $before={13}>
          <label htmlFor="radius">Radio de esquina:</label>
          <NumberBox id="radius" defaultValue="0 px" />
          <Caret />
        </OptionGroup>
      </OptionsBar>

      <Workspace>
        <Toolbox>
          {tools.map((t) => (
            <ToolButton key={t.name} aria-label={t.name} $active={t.name === "Rectángulo"}>
              <ToolIcon art={t.art} plain={t.plain} />
            </ToolButton>
          ))}
          <ToolButton aria-label="Colores" $h={26}>
            <svg width="24" height="26" viewBox="0 0 24 26">
              <rect x="16" y="4" width="4" height="4" fill="#000" />
              <rect x="19" y="7" width="5" height="4" fill="#fff" />
              <rect x="11" y="12" width="12" height="12" rx="1" fill="#fff" />
              <rect x="1.500" y="3.500" width="13" height="13" rx="2" fill="#000" stroke="#222" />
              <path d="M5.500 17v5.500H10M3.500 19l2-2 2 2" fill="none" stroke="#999" />
            </svg>
          </ToolButton>
          <ToolButton aria-label="Máscara rápida" $h={17}>
            <svg width="24" height="17" viewBox="0 0 24 17">
              <rect x="6" y="5" width="13" height="10" fill="#cfcfcf" />
              <circle cx="12.500" cy="10" r="3" fill="#474747" />
            </svg>
          </ToolButton>
          <ToolButton aria-label="Teclado" $h={16}>
            <svg width="24" height="16" viewBox="0 0 24 16">
              <rect x="6" y="5" width="13" height="8" fill="#cfcfcf" />
              <path d="M7.500 7.500h10M8 9.500h9" stroke="#474747" strokeDasharray="1 1" />
              <path d="M9 11.500h7" stroke="#474747" />
            </svg>
          </ToolButton>
        </Toolbox>

        <Editor>
          <DocTabs>
            <DocTab>
              <span>Proyecto nuevo.psd</span>
              <IconButton $w={14} $h={14} aria-label="Cerrar documento">
                <Cross />
              </IconButton>
            </DocTab>
            <DocTab $active>
              <span>Proyecto nuevo.psd *</span>
              <IconButton $w={14} $h={14} aria-label="Cerrar documento activo">
                <Cross />
              </IconButton>
            </DocTab>
          </DocTabs>
          <Stage>
            <Artboard>
              <svg width="640" height="360" viewBox="0 0 960 540" role="img" aria-label="Lienzo">
                <defs>
                  <pattern id="checks" width="16" height="16" patternUnits="userSpaceOnUse">
                    <rect width="16" height="16" fill="#fff" />
                    <path d="M8 0h8v8H8zM0 8h8v8H0z" fill="#c6c6c6" />
                  </pattern>
                </defs>
                <rect width="960" height="540" fill="url(#checks)" />
                <rect y="499" width="960" height="41" fill="#000" />
              </svg>
              <Overlay $x={181} $y={-55} width="20" height="20" viewBox="0 0 20 20">
                <path d="M10.500 1v19M1 10.500h19" stroke="#b4b4b4" />
              </Overlay>
              <Overlay $x={664} $y={251} width="42" height="42" viewBox="0 0 42 42">
                <rect x="4.500" y="4.500" width="33" height="33" fill="none" stroke="#5b7be0" />
                {[4.5, 21, 37.5].map((y) => [4.5, 21, 37.5].map((x) => <rect key={`${x}-${y}`} x={x - 3} y={y - 3} width="6" height="6" fill="#fff" />))}
                {[13.5, 28.5].map((y) =>
                  [13.5, 28.5].map((x) => <circle key={`${x}-${y}`} cx={x} cy={y} r="3.500" fill="#5b7be0" stroke="#eef1fb" strokeWidth="1.300" />)
                )}
              </Overlay>
            </Artboard>
          </Stage>
        </Editor>

        <Dock>
          <DockColumn $width={26}>
            <Handle>
              <Grip />
            </Handle>
            <DockGroup>
              <IconButton $w={26} $h={22} aria-label="Información">
                <svg width="14" height="14" viewBox="0 0 14 14">
                  <circle cx="7" cy="7" r="6" fill="none" stroke="currentColor" strokeWidth="1.200" />
                  <path d="M6.300 6h1.400v4.500H6.300zM6.300 3.500h1.400V5H6.300z" fill="currentColor" />
                </svg>
              </IconButton>
              <IconButton $w={26} $h={21} aria-label="Ajustes">
                <svg width="14" height="12" viewBox="0 0 14 12" fill="none" stroke="currentColor" strokeWidth="1.300">
                  <path d="M0 2h4M6 2h8M0 6h8.500M10.500 6H14M0 10h4M6 10h8M6 0v4M8.500 4v4M6 8v4" />
                </svg>
              </IconButton>
            </DockGroup>
            <DockGroup>
              <IconButton $w={26} $h={21} aria-label="Pinceles">
                <svg width="14" height="14" viewBox="0 0 14 14" fill="currentColor">
                  <path d="M0 0h6v1.300H0zM0 2.500h6v1.300H0zM0 5h5v1H0zM2.500 14c1.500-1 .5-4 3.500-5.800l3.500 2.300c.5 2.500-2.500 3.500-7 3.500zM6.500 7.500L11 1l3 1.800-3.500 7.200z" />
                </svg>
              </IconButton>
            </DockGroup>
            <DockGroup>
              <IconButton $w={26} $h={22} aria-label="Carácter">
                <Glyph size={17}>Tt</Glyph>
              </IconButton>
              <IconButton $w={26} $h={21} aria-label="Párrafo">
                <svg width="14" height="14" viewBox="0 0 14 14" fill="none" stroke="currentColor">
                  <path d="M7 1.500H5a3 3 0 0 0 0 6h2z" fill="currentColor" />
                  <path d="M7.500 1v13M10.500 1v13M5 1.500h7.500" strokeWidth="1.500" />
                </svg>
              </IconButton>
            </DockGroup>
            <DockGroup>
              <IconButton $w={26} $h={22} aria-label="CSS">
                <Glyph size={8} weight={700} family="Open Sans, sans-serif">CSS</Glyph>
              </IconButton>
              <IconButton $w={26} $h={21} aria-label="Imagen">
                <svg width="14" height="12" viewBox="0 0 14 12">
                  <rect x=".6" y=".6" width="12.800" height="10.500" fill="none" stroke="currentColor" strokeWidth="1.100" />
                  <path d="M1 11V8l3.500-4L8 8l2-1.500L13 9v2z" fill="currentColor" />
                  <circle cx="9.800" cy="3.800" r="1.300" fill="currentColor" />
                </svg>
              </IconButton>
            </DockGroup>
            <DockGroup $fill />
          </DockColumn>

          <DockColumn $width={178}>
            <Handle>
              <Grip inward />
            </Handle>
            <PanelTabs>
              <PanelTab $active>Historial</PanelTab>
              <PanelTab>Muestras</PanelTab>
              <PanelMenu $w={12} $h={14} aria-label="Menú del historial">
                <Burger />
              </PanelMenu>
            </PanelTabs>
            <HistoryPanel>
              <List>
                {["Abrir", "Nueva capa", "Rectángulo", "Rectángulo"].map((h, i) => (
                  <HistoryRow key={i} $current={i === 3}>
                    {h}
                  </HistoryRow>
                ))}
              </List>
              <Scrollbar>
                <ScrollEnd up />
                <ScrollEnd />
              </Scrollbar>
            </HistoryPanel>
            <PanelTabs>
              <PanelTab $active>Capas</PanelTab>
              <PanelTab>Canales</PanelTab>
              <PanelTab>Trazados</PanelTab>
              <PanelMenu $w={12} $h={14} aria-label="Menú de capas">
                <Burger />
              </PanelMenu>
            </PanelTabs>
            <LayersPanel>
              <LayerControls>
                <Dropdown label="Modo de fusión" width={107} height={16} options={["Normal", "Multiplicar", "Trama"]} />
                <ControlRow>
                  <label htmlFor="opacity">Opacidad:</label>
                  <NumberBox id="opacity" $width={26} defaultValue="100%" />
                  <Caret />
                </ControlRow>
                <ControlRow>
                  <span>Bloquear:</span>
                  <LockButtons>
                    <IconButton $w={10} aria-label="Bloquear transparencia">
                      <svg width="10" height="10" viewBox="0 0 10 10">
                        <rect x=".5" y=".5" width="9" height="9" fill="none" stroke="#d0d0d0" />
                        <path d="M1 1h2v2H1zM5 1h2v2H5zM3 3h2v2H3zM7 3h2v2H7zM1 5h2v2H1zM5 5h2v2H5zM3 7h2v2H3zM7 7h2v2H7z" fill="#d0d0d0" />
                      </svg>
                    </IconButton>
                    <IconButton $w={10} aria-label="Bloquear píxeles">
                      <svg width="10" height="10" viewBox="0 0 10 10" fill="#d0d0d0">
                        <path d="M0 10c1.500-1 .5-3.500 3-4.500l2 2C5 9.500 3 10 0 10zM4 5l4-5 2 1-4 5.500z" />
                      </svg>
                    </IconButton>
                    <IconButton $w={10} aria-label="Bloquear posición">
                      <svg width="10" height="10" viewBox="0 0 10 10">
                        <path d="M5 1v8M1 5h8" stroke="#d0d0d0" />
                        <path d="M3 2h4L5 0zM3 8h4l-2 2zM2 3v4L0 5zM8 3v4l2-2z" fill="#d0d0d0" />
                      </svg>
                    </IconButton>
                    <IconButton $w={10} aria-label="Bloquear todo">
                      <FaLock size={10} color="#d0d0d0" />
                    </IconButton>
                  </LockButtons>
                  <OptionGroup $before={2}>
                    <label htmlFor="fill">Relleno:</label>
                    <NumberBox id="fill" $width={26} defaultValue="100%" />
                    <Caret />
                  </OptionGroup>
                </ControlRow>
              </LayerControls>
              <LayerArea>
                <List>
                  {layers.map((l) => (
                    <LayerRow key={l.name} $active={l.kind === "selected"}>
                      <IconButton $w={12} $h={12} aria-label={`Visibilidad de ${l.name}`}>
                        <FaEye size={10} />
                      </IconButton>
                      <OptionGroup $before={4}>
                        <Thumb kind={l.kind} />
                      </OptionGroup>
                      <LayerName>{l.name}</LayerName>
                      {l.kind === "plain" && <FaLock size={10} color="#8c8c8c" />}
                    </LayerRow>
                  ))}
                </List>
                <Scrollbar>
                  <ScrollEnd up />
                  <ScrollEnd />
                </Scrollbar>
              </LayerArea>
              <LayerActions>
                <IconButton $w={17} aria-label="Enlazar">
                  <svg width="10" height="6" viewBox="0 0 10 6" fill="none" stroke="currentColor" strokeWidth="1.200">
                    <rect x=".6" y="1" width="3.500" height="4" rx="1" />
                    <rect x="5.900" y="1" width="3.500" height="4" rx="1" />
                    <path d="M3 3h4" />
                  </svg>
                </IconButton>
                <IconButton $w={17} aria-label="Efectos">
                  <svg width="14" height="14" viewBox="0 0 14 14" fill="#bdbdbd">
                    <text x="1" y="11" fontFamily="Open Sans, sans-serif" fontSize="9">
                      eff
                    </text>
                    <path d="M13 9.500v3h-3z" />
                  </svg>
                </IconButton>
                <IconButton $w={16} aria-label="Añadir máscara">
                  <svg width="11" height="9" viewBox="0 0 11 9">
                    <rect width="11" height="9" fill="currentColor" />
                    <circle cx="5.500" cy="4.500" r="2.300" fill="#474747" />
                  </svg>
                </IconButton>
                <IconButton $w={17} aria-label="Capa de ajuste">
                  <svg width="12" height="11" viewBox="0 0 12 11">
                    <circle cx="5.500" cy="5.500" r="4.500" fill="none" stroke="currentColor" />
                    <path d="M5.500 1a4.500 4.500 0 0 0 0 9zM11.500 7.500v3h-3z" fill="currentColor" />
                  </svg>
                </IconButton>
                <IconButton $w={17} aria-label="Nuevo grupo">
                  <svg width="11" height="9" viewBox="0 0 11 9">
                    <path d="M0 .5h4l1 1.300h6V9H0z" fill="currentColor" />
                  </svg>
                </IconButton>
                <IconButton $w={17} aria-label="Nueva capa">
                  <svg width="11" height="11" viewBox="0 0 11 11" fill="none" stroke="currentColor">
                    <path d="M1 4.500V1h9v9H5.500M1 5.500h4.500V10z" />
                  </svg>
                </IconButton>
                <IconButton $w={16} aria-label="Eliminar">
                  <svg width="10" height="10" viewBox="0 0 10 10" fill="currentColor">
                    <path d="M0 0h10v2H0zM.5 2.300h9L8.500 9.200q-.2.800-1 .8h-5q-.8 0-1-.8z" />
                  </svg>
                </IconButton>
              </LayerActions>
            </LayersPanel>
          </DockColumn>
        </Dock>
      </Workspace>

      <Taskbar>
        <Apps>
          {apps.map((a) => (
            <AppButton key={a.name} aria-label={a.name} $active={a.state === "active"}>
              <svg width="18" height="18" viewBox="0 0 18 18">
                {a.art}
              </svg>
              <RunMark $kind={a.state} />
            </AppButton>
          ))}
        </Apps>
        <Tray>
          <IconButton aria-label="Iconos ocultos">
            <Line d="M3 7.500l3-3 3 3" w={1.200} />
          </IconButton>
          <IconButton $w={23} aria-label="Micrófono">
            <svg width="12" height="12" viewBox="0 0 12 12" fill="none" stroke="#6fc3cf" strokeWidth="1.100">
              <rect x="4.300" y="1" width="3.400" height="6" rx="1.700" />
              <path d="M2.500 5.500a3.500 3.500 0 0 0 7 0M6 9v2.500" />
            </svg>
          </IconButton>
          <Language $align="center">
            ESP
            <br />
            LAA
          </Language>
          <IconButton $w={16} aria-label="Red">
            <Line d="M7 2H1v7h9V7M3.500 11h4M8 1.500h3v3H8zM9.500 4.500V7" />
          </IconButton>
          <IconButton $w={16} aria-label="Volumen">
            <Line d="M1 4.500h1.500L5 2v8L2.500 7.500H1zM6.500 4.500q1 1.500 0 3M8 3q2 3 0 6M9.500 1.500q3 4.500 0 9" />
          </IconButton>
          <Clock $align="right">
            03:05 a. m.
            <br />
            19/04/2026
          </Clock>
        </Tray>
      </Taskbar>
    </Screen>
  );
}
